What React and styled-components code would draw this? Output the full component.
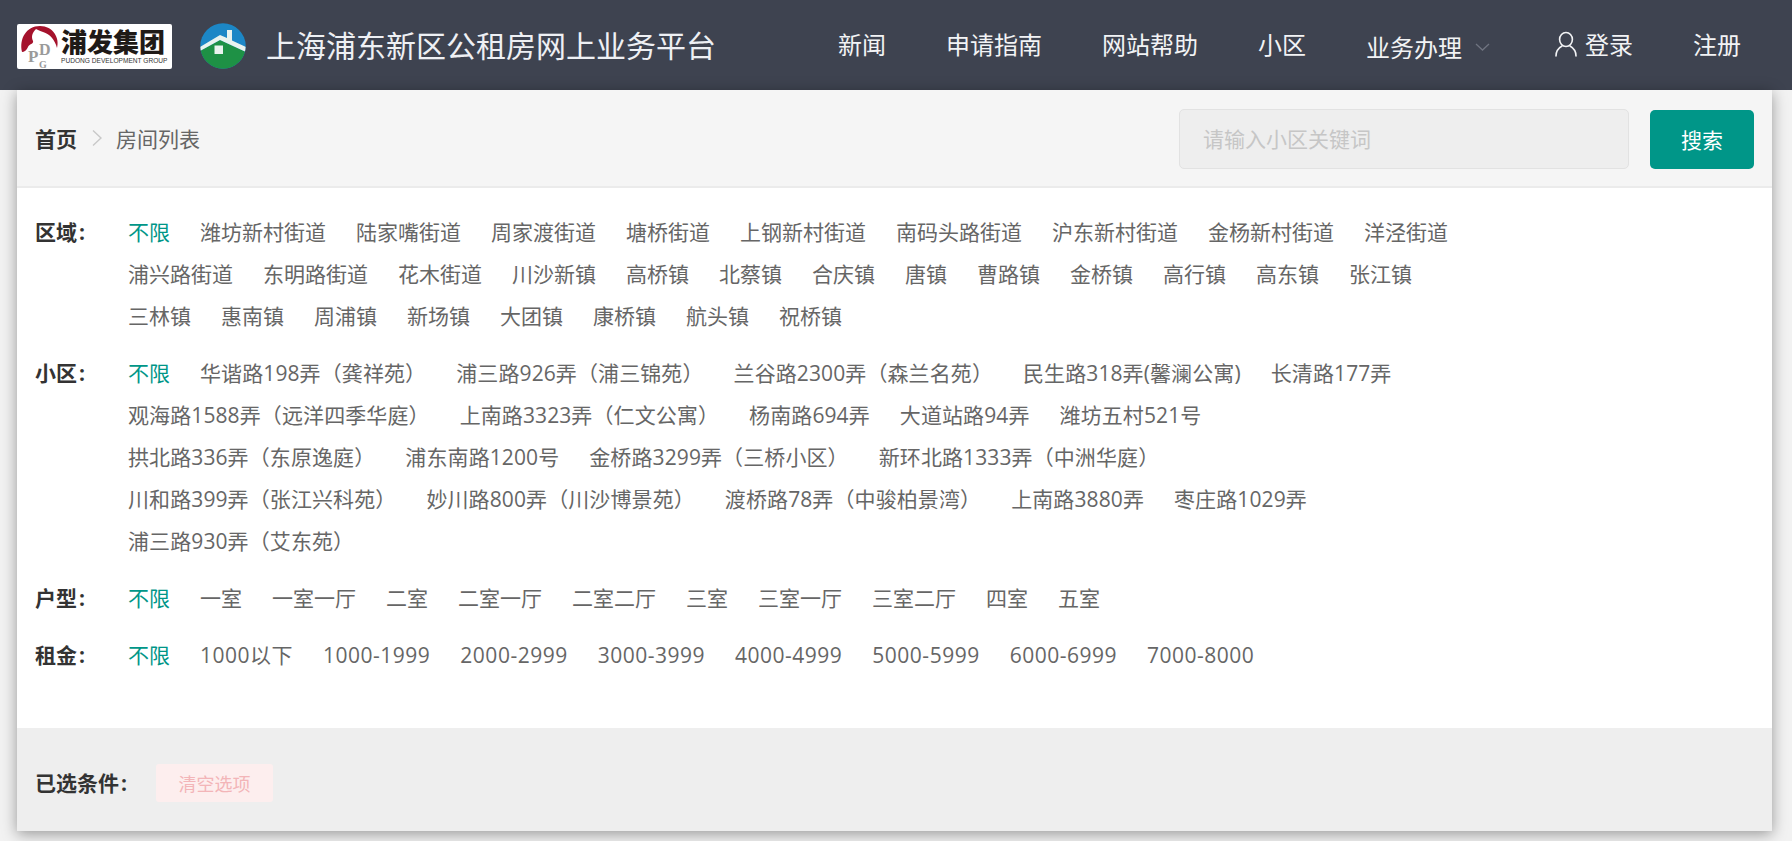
import React from "react";
import styled, { createGlobalStyle } from "styled-components";

const FONT = `"Open Sans", "Noto Sans CJK SC", sans-serif`;

const Global = createGlobalStyle`
  html, body { margin: 0; padding: 0; background: #f2f2f2; }
  body { font-family: ${FONT}; }
  * { box-sizing: border-box; }
`;

const Header = styled.header`
  height: 90px;
  background: #3e4350;
  display: flex;
  align-items: center;
  padding: 0 51px 0 17px;
`;
const LogoBox = styled.div`
  width: 155px;
  height: 45px;
  margin-top: 3px;
  background: #fff;
  border-radius: 2px;
  flex: none;
  display: flex;
`;
const LogoWords = styled.div`
  display: flex;
  flex-direction: column;
  align-items: flex-start;
  width: 106px;
  color: #1f1a17;
`;
const LogoName = styled.span`
  font-family: "Noto Sans CJK SC", sans-serif;
  font-size: 26px;
  font-weight: 900;
  line-height: 28px;
  margin-top: 3px;
`;
const LogoEnglish = styled.span`
  font-family: "Liberation Sans", sans-serif;
  font-size: 6.6px;
  line-height: 9px;
  margin-top: 1px;
  white-space: nowrap;
  color: #333;
`;
const HouseWrap = styled.div`
  margin: 2px 0 0 28px;
  width: 46px;
  height: 46px;
  flex: none;
  display: flex;
`;
const Title = styled.h1`
  margin: 0 0 2px 20px;
  font-size: 30px;
  font-weight: 400;
  color: #eef0f4;
  white-space: nowrap;
`;
const Nav = styled.nav`
  margin-left: auto;
  margin-bottom: 3px;
  display: flex;
  align-items: center;
  gap: 60px;
`;
const NavItem = styled.a`
  display: flex;
  align-items: center;
  color: #f2f3f5;
  font-size: 24px;
  white-space: nowrap;
  position: relative;
  top: ${(p) => (p.$low ? "3px" : "0")};
`;
const Main = styled.div`
  padding: 0 20px 10px 17px;
`;
const Panel = styled.main`
  background: #fff;
  box-shadow: 0 3px 14px rgba(0, 0, 0, 0.38);
`;
const TopBar = styled.div`
  height: 98px;
  background: #f5f5f5;
  border-bottom: 2px solid #ebebeb;
  display: flex;
  align-items: center;
  padding: 0 18px 0 18px;
`;
const Crumb = styled.b`
  font-size: 21px;
  font-weight: 700;
  color: #333;
`;
const CrumbCurrent = styled.span`
  font-size: 21px;
  color: #666;
`;
const CrumbSep = styled.span`
  margin: 0 14px 0 15px;
  display: flex;
`;
const SearchInput = styled.input`
  margin: 2px 0 0 auto;
  width: 450px;
  height: 60px;
  padding: 0 23px;
  background: #eeeeee;
  border: 1px solid #e2e2e2;
  border-radius: 5px;
  font: 400 21px ${FONT};
  outline: none;
  &::placeholder { color: #c6c6c6; opacity: 1; }
`;
const SearchButton = styled.button`
  margin: 2px 0 0 21px;
  width: 104px;
  height: 59px;
  border: 0;
  border-radius: 5px;
  background: #009688;
  color: #fff;
  font: 400 21px ${FONT};
`;
const Filters = styled.div`
  padding: 23px 18px 52px;
  display: flex;
  flex-direction: column;
  gap: 15px;
`;
const FilterRow = styled.section`
  display: flex;
  align-items: flex-start;
`;
const FilterLabel = styled.div`
  width: 93px;
  flex: none;
  font-size: 21px;
  font-weight: 700;
  line-height: 42px;
  color: #333;
`;
const Colon = styled.span`
  margin-left: 2px;
`;
const TagList = styled.div`
  display: flex;
  flex-wrap: wrap;
  column-gap: 30px;
  max-width: 1326px;
  flex: 1;
`;
const Tag = styled.a`
  font-size: 21px;
  line-height: 42px;
  white-space: nowrap;
  letter-spacing: ${(p) => p.$track || 0}px;
  color: ${(p) => (p.$active ? "#009688" : "#666")};
`;
const Footer = styled.div`
  height: 103px;
  background: #eeeeee;
  display: flex;
  align-items: center;
  padding: 6px 0 0 18px;
`;
const FooterLabel = styled.span`
  font-size: 21px;
  font-weight: 700;
  color: #333;
  margin-bottom: 2px;
`;
const ClearChip = styled.button`
  margin-left: 29px;
  width: 117px;
  height: 38px;
  border: 0;
  border-radius: 3px;
  background: #fdeeee;
  color: #f3b5b8;
  font: 400 18px ${FONT};
`;

const Emblem = () => (
  <svg width="44" height="45" viewBox="0 0 44 45" style={{ flex: "none" }}>
    <path d="M5 28 C2 15 9 2 23 2 C36 2 43 14 40 24 C38 16 33 10 26 8 C23 7 21 6 19 5 C15 9 14 13 16 17 C17 20 12 20 11 23 C10 26 7 28 5 28Z" fill="#a5122c" />
    <text fontFamily="Liberation Serif" fontWeight="700" fill="#9a9a9a">
      <tspan x="11" y="38" fontSize="17">P</tspan>
      <tspan x="22" y="31" fontSize="16">D</tspan>
      <tspan x="22" y="44" fontSize="10">G</tspan>
    </text>
  </svg>
);

const HouseLogo = () => (
  <svg width="46" height="46" viewBox="0 0 46 46">
    <defs>
      <clipPath id="house-clip"><circle cx="23" cy="23" r="22.7" /></clipPath>
    </defs>
    <g clipPath="url(#house-clip)">
      <rect width="46" height="46" fill="#1c87c6" />
      <path d="M0 28 L20 17 L46 29 L46 46 L0 46Z" fill="#1e9145" />
      <path d="M0 24 L20 12 L27 15 L27 7 L32 7 L32 17.5 L46 24 L46 29 L20 17 L0 28Z" fill="#eaf3ee" />
      <rect x="14.5" y="22.5" width="8.5" height="8.5" fill="#eaf3ee" />
    </g>
  </svg>
);

const UserIcon = () => (
  <svg width="24" height="26" viewBox="0 0 24 26" fill="none" stroke="#f2f3f5" strokeWidth="1.6" style={{ margin: "0 7px 0 4px" }}>
    <ellipse cx="12" cy="8.5" rx="6.4" ry="7" />
    <path d="M8 15 C4.5 17 2 20.5 2 25 M16 15 C19.5 17 22 20.5 22 25" strokeLinecap="round" />
  </svg>
);

const Chevron = () => (
  <svg width="15" height="8" viewBox="0 0 15 8" fill="none" stroke="#6f7480" strokeWidth="1.3" style={{ marginLeft: 13 }}>
    <path d="M1 1 L7.5 7 L14 1" />
  </svg>
);

const CrumbArrow = () => (
  <svg width="10" height="18" viewBox="0 0 10 18" fill="none" stroke="#c8c8c8" strokeWidth="1.4">
    <path d="M1 1.5 L9 9 L1 16.5" />
  </svg>
);

const FILTERS = [
  {
    label: "区域",
    items: ["潍坊新村街道", "陆家嘴街道", "周家渡街道", "塘桥街道", "上钢新村街道", "南码头路街道", "沪东新村街道", "金杨新村街道", "洋泾街道", "浦兴路街道", "东明路街道", "花木街道", "川沙新镇", "高桥镇", "北蔡镇", "合庆镇", "唐镇", "曹路镇", "金桥镇", "高行镇", "高东镇", "张江镇", "三林镇", "惠南镇", "周浦镇", "新场镇", "大团镇", "康桥镇", "航头镇", "祝桥镇"],
  },
  {
    label: "小区",
    track: 0.1,
    items: ["华谐路198弄（龚祥苑）", "浦三路926弄（浦三锦苑）", "兰谷路2300弄（森兰名苑）", "民生路318弄(馨澜公寓)", "长清路177弄", "观海路1588弄（远洋四季华庭）", "上南路3323弄（仁文公寓）", "杨南路694弄", "大道站路94弄", "潍坊五村521号", "拱北路336弄（东原逸庭）", "浦东南路1200号", "金桥路3299弄（三桥小区）", "新环北路1333弄（中洲华庭）", "川和路399弄（张江兴科苑）", "妙川路800弄（川沙博景苑）", "渡桥路78弄（中骏柏景湾）", "上南路3880弄", "枣庄路1029弄", "浦三路930弄（艾东苑）"],
  },
  {
    label: "户型",
    items: ["一室", "一室一厅", "二室", "二室一厅", "二室二厅", "三室", "三室一厅", "三室二厅", "四室", "五室"],
  },
  {
    label: "租金",
    track: 0.5,
    items: ["1000以下", "1000-1999", "2000-2999", "3000-3999", "4000-4999", "5000-5999", "6000-6999", "7000-8000"],
  },
];

export default function App() {
  return (
    <>
      <Global />
      <Header>
        <LogoBox>
          <Emblem />
          <LogoWords>
            <LogoName>浦发集团</LogoName>
            <LogoEnglish>PUDONG DEVELOPMENT GROUP</LogoEnglish>
          </LogoWords>
        </LogoBox>
        <HouseWrap><HouseLogo /></HouseWrap>
        <Title>上海浦东新区公租房网上业务平台</Title>
        <Nav>
          <NavItem>新闻</NavItem>
          <NavItem>申请指南</NavItem>
          <NavItem>网站帮助</NavItem>
          <NavItem>小区</NavItem>
          <NavItem $low>业务办理<Chevron /></NavItem>
          <NavItem><UserIcon />登录</NavItem>
          <NavItem>注册</NavItem>
        </Nav>
      </Header>
      <Main>
        <Panel>
          <TopBar>
            <Crumb>首页</Crumb>
            <CrumbSep><CrumbArrow /></CrumbSep>
            <CrumbCurrent>房间列表</CrumbCurrent>
            <SearchInput placeholder="请输入小区关键词" />
            <SearchButton>搜索</SearchButton>
          </TopBar>
          <Filters>
            {FILTERS.map((f) => (
              <FilterRow key={f.label}>
                <FilterLabel>{f.label}<Colon>:</Colon></FilterLabel>
                <TagList>
                  <Tag $active>不限</Tag>
                  {f.items.map((t) => (
                    <Tag key={t} $track={f.track}>{t}</Tag>
                  ))}
                </TagList>
              </FilterRow>
            ))}
          </Filters>
          <Footer>
            <FooterLabel>已选条件<Colon>:</Colon></FooterLabel>
            <ClearChip>清空选项</ClearChip>
          </Footer>
        </Panel>
      </Main>
    </>
  );
}
